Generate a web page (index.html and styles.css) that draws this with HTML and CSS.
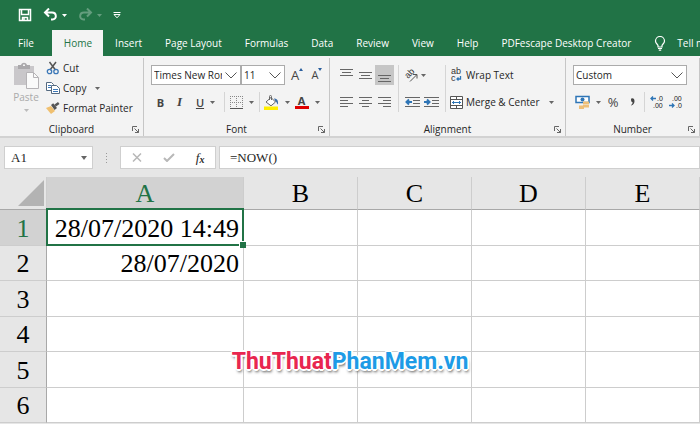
FILE: index.html
```html
<!DOCTYPE html>
<html lang="en">
<head>
    <meta charset="UTF-8">
    <meta name="viewport" content="width=device-width, initial-scale=1.0">
    <title>Spreadsheet</title>
    <link rel="stylesheet" href="styles.css">
</head>
<body>
    <header class="top">
        <div class="quick-access">
            <button class="quick" aria-label="Save">
                <svg width="14" height="14" viewBox="0 0 14 14" fill="none" stroke="#fff" stroke-width="1.5"><path d="M1.5 1.5h11v11h-11z"/><path d="M3.5 1.5v5h7v-5M4.5 12.5v-3h5v3"/><path d="M6 10v2"/></svg>
            </button>
            <button class="quick" aria-label="Undo">
                <svg width="15" height="14" viewBox="0 0 15 14" fill="none" stroke="#fff" stroke-width="2"><path d="M6 .5 2 4.500l4 4M2.500 4.500h6.500c5 0 5 7 .5 7H8"/></svg>
                <svg class="arrow" width="5" height="3" viewBox="0 0 5 3"><path d="M0 0h5L2.500 3z"/></svg>
            </button>
            <button class="quick faded" aria-label="Redo">
                <svg width="15" height="14" viewBox="0 0 15 14" fill="none" stroke="#fff" stroke-width="2"><path d="M9 .5 13 4.500l-4 4M12.500 4.500H6c-5 0-5 7-.5 7H7"/></svg>
                <svg class="arrow" width="5" height="3" viewBox="0 0 5 3"><path d="M0 0h5L2.500 3z"/></svg>
            </button>
            <button class="quick" aria-label="Customize">
                <svg width="8" height="7" viewBox="0 0 8 7" fill="none" stroke="#fff"><path d="M0.500 .5h7M1 2.500h6L4 5.800z"/></svg>
            </button>
        </div>
        <nav class="tabs">
            <a href="#" class="tab file">File</a>
            <a href="#" class="tab active">Home</a>
            <a href="#" class="tab">Insert</a>
            <a href="#" class="tab">Page Layout</a>
            <a href="#" class="tab">Formulas</a>
            <a href="#" class="tab">Data</a>
            <a href="#" class="tab">Review</a>
            <a href="#" class="tab">View</a>
            <a href="#" class="tab">Help</a>
            <a href="#" class="tab">PDFescape Desktop Creator</a>
            <a href="#" class="tab tell">
                <svg width="12" height="15" viewBox="0 0 12 15" fill="none" stroke="#fff" stroke-width="1.200"><path d="M4 11V9.500C3.500 8 1.500 7.500 1.500 5a4.500 4.500 0 0 1 9 0c0 2.500-2 3-2.500 4.500V11zM4 12.500h4M4.800 14.200h2.400"/></svg>
                Tell me
            </a>
        </nav>
    </header>

    <div class="ribbon">
        <section class="group clipboard">
            <div class="tools">
                <button class="paste">
                    <svg width="26" height="27" viewBox="0 0 26 27"><path fill="#c9c7ca" d="M1 4h20v19H1z"/><path fill="#aaa8ab" d="M5 3h3c1-3 5-3 6 0h3v4H5z"/><path fill="#f3f3f3" d="M10 2.500h2v1.500h-2z"/><path fill="#fafafa" stroke="#b5b3b6" d="M13.500 10.500h7l5 5v11h-12z"/><path fill="none" stroke="#b5b3b6" d="M20.500 10.500v5h5"/></svg>
                    <span>Paste</span>
                    <svg class="arrow" width="5" height="3" viewBox="0 0 5 3"><path d="M0 0h5L2.500 3z"/></svg>
                </button>
                <div class="stack">
                    <button class="labelled">
                        <svg width="14" height="14" viewBox="0 0 14 14" fill="none"><path stroke="#555" stroke-width="1.500" d="M3.500 1 9.500 9M10 1 4 9"/><circle cx="3.500" cy="10.500" r="2.200" stroke="#3c78b8" stroke-width="1.300"/><circle cx="10" cy="10.500" r="2.200" stroke="#3c78b8" stroke-width="1.300"/></svg>
                        Cut
                    </button>
                    <button class="labelled">
                        <svg width="14" height="14" viewBox="0 0 14 14" fill="#fff" stroke="#556a80"><path d="M.5 1.500h5l2 2v6h-7z"/><path d="M2 4.500h3M2 6.500h3" stroke="#3c78b8"/><path d="M5.500 4.500h5l3 3v5h-8z"/><path d="M7 8.500h5M7 10.500h5" stroke="#3c78b8"/></svg>
                        Copy
                        <svg class="arrow" width="5" height="3" viewBox="0 0 5 3"><path d="M0 0h5L2.500 3z"/></svg>
                    </button>
                    <button class="labelled">
                        <svg width="14" height="14" viewBox="0 0 14 14"><path fill="#f0c070" d="m0 7 5-2 4 5-4 3z"/><path fill="#555" d="m5 4 2.200-1.800L11 7 8.600 9zM8.500 3.500 12 1l1.500 2L10 5.500z"/></svg>
                        Format Painter
                    </button>
                </div>
            </div>
            <h2>Clipboard <svg class="launcher" width="7" height="7" viewBox="0 0 7 7"><path d="M.5 5V.5H5M2.500 2.500l4 4M6.500 3v3.500H3"/></svg></h2>
        </section>

        <section class="group font">
            <div class="tools rows">
                <div class="row">
                    <span class="combo family">
                        <select aria-label="Font"><option>Times New Roman</option></select>
                        <svg class="chevron" width="12" height="7" viewBox="0 0 12 7"><path d="M.5.5 6 6 11.500.5"/></svg>
                    </span>
                    <span class="combo size">
                        <select aria-label="Font size"><option>11</option></select>
                        <svg class="chevron" width="12" height="7" viewBox="0 0 12 7"><path d="M.5.5 6 6 11.500.5"/></svg>
                    </span>
                    <button class="tool grow" aria-label="Increase font size"><span>A</span><svg width="4" height="3" viewBox="0 0 4 3"><path fill="#2b5f9e" d="M0 3h4L2 0z"/></svg></button>
                    <button class="tool shrink" aria-label="Decrease font size"><span>A</span><svg width="4" height="3" viewBox="0 0 4 3"><path fill="#2b5f9e" d="M0 0h4L2 3z"/></svg></button>
                </div>
                <div class="row">
                    <button class="tool bold">B</button>
                    <button class="tool italic">I</button>
                    <button class="tool split underline"><u>U</u><svg class="arrow" width="5" height="3" viewBox="0 0 5 3"><path d="M0 0h5L2.500 3z"/></svg></button>
                    <span class="divider"></span>
                    <button class="tool split" aria-label="Borders">
                        <svg width="13" height="13" viewBox="0 0 13 13" fill="none" stroke="#888"><path stroke-dasharray="1 1" d="M.5 0v12M12.500 0v12M0 .5h13M6.500 0v12M0 6.500h13"/><path stroke="#555" d="M0 12.500h13"/></svg>
                        <svg class="arrow" width="5" height="3" viewBox="0 0 5 3"><path d="M0 0h5L2.500 3z"/></svg>
                    </button>
                    <span class="divider"></span>
                    <button class="tool split" aria-label="Fill color">
                        <svg width="15" height="15" viewBox="0 0 15 15"><path fill="#ffee00" d="M0 11.500h14v3.500H0z"/><path fill="#fff" stroke="#666" d="m2 7 5-4.500L11.500 7 7 10.800z"/><path fill="none" stroke="#666" d="M5.500 5V1.500c0-1.500 2-1.500 2 0V5"/><path fill="#3c6ea8" d="M10 3.500c3 0 4.500 2 4 6-1.500-.5-1-3-2.500-3z"/></svg>
                        <svg class="arrow" width="5" height="3" viewBox="0 0 5 3"><path d="M0 0h5L2.500 3z"/></svg>
                    </button>
                    <button class="tool split" aria-label="Font color">
                        <span class="letter">A</span>
                        <svg class="arrow" width="5" height="3" viewBox="0 0 5 3"><path d="M0 0h5L2.500 3z"/></svg>
                    </button>
                </div>
            </div>
            <h2>Font <svg class="launcher" width="7" height="7" viewBox="0 0 7 7"><path d="M.5 5V.5H5M2.500 2.500l4 4M6.500 3v3.500H3"/></svg></h2>
        </section>

        <section class="group alignment">
            <div class="tools">
                <div class="rows">
                    <div class="row">
                        <button class="tool" aria-label="Top align"><svg class="lines" width="13" height="13" viewBox="0 0 13 13"><path d="M0 .5h13M2 3.500h9M0 6.500h13"/></svg></button>
                        <button class="tool" aria-label="Middle align"><svg class="lines" width="13" height="13" viewBox="0 0 13 13"><path d="M0 3.500h13M2 6.500h9M0 9.500h13"/></svg></button>
                        <button class="tool pressed" aria-label="Bottom align"><svg class="lines" width="13" height="13" viewBox="0 0 13 13"><path d="M0 6.500h13M2 9.500h9M0 12.500h13"/></svg></button>
                    </div>
                    <div class="row">
                        <button class="tool" aria-label="Align left"><svg class="lines" width="13" height="13" viewBox="0 0 13 13"><path d="M0 1.500h13M0 4.500h8M0 7.500h13M0 10.500h8"/></svg></button>
                        <button class="tool" aria-label="Center"><svg class="lines" width="13" height="13" viewBox="0 0 13 13"><path d="M0 1.500h13M3 4.500h7M0 7.500h13M3 10.500h7"/></svg></button>
                        <button class="tool" aria-label="Align right"><svg class="lines" width="13" height="13" viewBox="0 0 13 13"><path d="M0 1.500h13M5 4.500h8M0 7.500h13M5 10.500h8"/></svg></button>
                    </div>
                </div>
                <span class="divider"></span>
                <div class="rows">
                    <div class="row">
                        <button class="tool split orient" aria-label="Orientation">
                            <svg width="16" height="16" viewBox="0 0 16 16"><text x="0" y="0" transform="translate(5 12) rotate(-45)" class="tiny">ab</text><path fill="none" stroke="#555" d="M7 14.500 13.500 8M10 7.500h4v4"/></svg>
                            <svg class="arrow" width="5" height="3" viewBox="0 0 5 3"><path d="M0 0h5L2.500 3z"/></svg>
                        </button>
                    </div>
                    <div class="row">
                        <button class="tool" aria-label="Decrease indent"><svg class="lines" width="15" height="13" viewBox="0 0 15 13"><path d="M0 1.500h15M8 4.500h7M8 7.500h7M0 10.500h15"/><path stroke="#2e75b6" stroke-width="2" d="M7 6H2M4 3.500 1.500 6 4 8.500"/></svg></button>
                        <button class="tool" aria-label="Increase indent"><svg class="lines" width="15" height="13" viewBox="0 0 15 13"><path d="M0 1.500h15M8 4.500h7M8 7.500h7M0 10.500h15"/><path stroke="#2e75b6" stroke-width="2" d="M0 6h5M3 3.500 5.500 6 3 8.500"/></svg></button>
                    </div>
                </div>
                <span class="divider"></span>
                <div class="rows">
                    <div class="row">
                        <button class="labelled">
                            <svg width="13" height="18" viewBox="0 0 13 18"><text x="1" y="8" class="tiny">ab</text><text x="1" y="15" class="tiny">c</text><path fill="none" stroke="#2e75b6" stroke-width="1.300" d="M10.500 10v3H7M8.500 11.500 7 13l1.500 1.500"/></svg>
                            Wrap Text
                        </button>
                    </div>
                    <div class="row">
                        <button class="labelled">
                            <svg width="13" height="13" viewBox="0 0 13 13" fill="none" stroke="#555"><path fill="#fff" d="M.5.5h12v12H.5z"/><path d="M.5 3.500h12M.5 9.500h12M6.500.5v3M6.500 9.500v3"/><path stroke="#2e75b6" d="M2 6.500h9M4 5 2.500 6.500 4 8M9 5l1.500 1.500L9 8"/></svg>
                            Merge &amp; Center
                            <svg class="arrow" width="5" height="3" viewBox="0 0 5 3"><path d="M0 0h5L2.500 3z"/></svg>
                        </button>
                    </div>
                </div>
            </div>
            <h2>Alignment <svg class="launcher" width="7" height="7" viewBox="0 0 7 7"><path d="M.5 5V.5H5M2.500 2.500l4 4M6.500 3v3.500H3"/></svg></h2>
        </section>

        <section class="group number">
            <div class="tools rows">
                <div class="row">
                    <span class="combo format">
                        <select aria-label="Number format"><option>Custom</option></select>
                        <svg class="chevron" width="12" height="7" viewBox="0 0 12 7"><path d="M.5.5 6 6 11.500.5"/></svg>
                    </span>
                </div>
                <div class="row">
                    <button class="tool split" aria-label="Currency">
                        <svg width="15" height="14" viewBox="0 0 15 14"><path fill="#fff" stroke="#2e75b6" stroke-width="1.500" d="M1 1.500h13v6H1z"/><circle cx="7.500" cy="4.500" r="2" fill="#2e75b6"/><path fill="#eebf78" d="M8 6.500h6v3H8zM8 10h6v2.500H8zM4 10.500h5V14H4z"/></svg>
                        <svg class="arrow" width="5" height="3" viewBox="0 0 5 3"><path d="M0 0h5L2.500 3z"/></svg>
                    </button>
                    <button class="tool percent">%</button>
                    <button class="tool comma" aria-label="Comma style"><svg width="5" height="8" viewBox="0 0 5 8"><path fill="#444" d="M1 1.500C1-.2 4.500-.2 4.500 3c0 2-1 3.600-3 4.600L1 7c1.200-.8 1.600-1.600 1.600-2.800C1.600 4.200 1 3 1 1.500z"/></svg></button>
                    <span class="divider"></span>
                    <button class="tool" aria-label="Increase decimal"><svg width="15" height="18" viewBox="0 0 15 18"><text x="8" y="8" class="digits">.0</text><text x="4" y="15" class="digits">.00</text><path fill="none" stroke="#2e75b6" stroke-width="1.300" d="M7 5.500H2M4 3.500l-2 2 2 2"/></svg></button>
                    <button class="tool" aria-label="Decrease decimal"><svg width="15" height="18" viewBox="0 0 15 18"><text x="4" y="8" class="digits">.00</text><text x="8" y="15" class="digits">.0</text><path fill="none" stroke="#2e75b6" stroke-width="1.300" d="M1 12.500h5M4 10.500l2 2-2 2"/></svg></button>
                </div>
            </div>
            <h2>Number <svg class="launcher" width="7" height="7" viewBox="0 0 7 7"><path d="M.5 5V.5H5M2.500 2.500l4 4M6.500 3v3.500H3"/></svg></h2>
        </section>
    </div>

    <div class="formula-bar">
        <span class="name-box">
            <input type="text" value="A1" aria-label="Name box">
            <svg class="arrow" width="6" height="4" viewBox="0 0 6 4"><path d="M0 0h6L3 4z"/></svg>
        </span>
        <svg class="dots" width="2" height="10" viewBox="0 0 2 10"><path fill="#999" d="M0 0h1v1H0zM0 3h1v1H0zM0 6h1v1H0zM0 9h1v1H0z"/></svg>
        <div class="formula-buttons">
            <button aria-label="Cancel"><svg width="10" height="9" viewBox="0 0 10 9" fill="none" stroke="#b8b8b8" stroke-width="1.500"><path d="m1 .5 8 8M9 .5l-8 8"/></svg></button>
            <button aria-label="Enter"><svg width="12" height="9" viewBox="0 0 12 9" fill="none" stroke="#b8b8b8" stroke-width="2"><path d="m1 5 3 3 7-7"/></svg></button>
            <button class="fx" aria-label="Insert function">f<sub>x</sub></button>
        </div>
        <input class="formula" type="text" value="=NOW()" aria-label="Formula">
    </div>

    <main class="sheet">
        <table>
            <colgroup><col class="col-head"><col class="col-a"><col><col><col><col></colgroup>
            <thead>
                <tr>
                    <th class="corner"><svg width="26" height="26" viewBox="0 0 26 26"><path fill="#b3b3b3" d="M26 0v26H0z"/></svg></th>
                    <th class="current">A</th><th>B</th><th>C</th><th>D</th><th>E</th>
                </tr>
            </thead>
            <tbody>
                <tr><th class="current">1</th><td class="selected">28/07/2020 14:49</td><td></td><td></td><td></td><td></td></tr>
                <tr><th>2</th><td>28/07/2020</td><td></td><td></td><td></td><td></td></tr>
                <tr><th>3</th><td></td><td></td><td></td><td></td><td></td></tr>
                <tr><th>4</th><td></td><td></td><td></td><td></td><td></td></tr>
                <tr><th>5</th><td></td><td></td><td></td><td></td><td></td></tr>
                <tr><th>6</th><td></td><td></td><td></td><td></td><td></td></tr>
            </tbody>
        </table>
        <p class="watermark"><span>ThuThuat</span>PhanMem.vn</p>
    </main>
</body>
</html>
```
FILE: styles.css
```css
/* General */
* {
    box-sizing: border-box;
}

body {
    margin: 0;
    height: 100vh;
    overflow: hidden;
    font-family: "Open Sans", "Noto Sans", sans-serif;
    font-size: 10px;
    color: #262626;
    background: #e6e6e6;
}

button,
input,
select {
    font: inherit;
    color: inherit;
    margin: 0;
    padding: 0;
    border: none;
    background: none;
    border-radius: 0;
}

svg {
    display: block;
    flex: none;
}

.arrow {
    fill: #666;
}

/* Title bar and tabs */
.top {
    background: #217346;
    color: #fff;
}

.quick-access {
    display: flex;
    align-items: center;
    gap: 11px;
    height: 30px;
    padding: 0 18px;
}

.quick {
    display: flex;
    align-items: center;
    gap: 4px;
}

.quick .arrow {
    fill: #fff;
}

.faded {
    opacity: 0.3;
}

.tabs {
    display: flex;
    height: 26px;
    padding-left: 6px;
    overflow: hidden;
}

.tab {
    display: flex;
    flex: none;
    align-items: center;
    padding: 0 11px 0 12px;
    color: #fff;
    text-decoration: none;
    white-space: nowrap;
}

.tab.file {
    margin-right: 7px;
}

.tab.active {
    background: #f3f3f3;
    color: #217346;
}

.tell {
    gap: 11px;
}

/* Ribbon */
.ribbon {
    display: flex;
    height: 82px;
    background: #f3f3f3;
    border-bottom: 2px solid #d2d2d2;
    overflow: hidden;
}

.group {
    display: flex;
    flex: none;
    flex-direction: column;
    justify-content: space-between;
    margin-top: 2px;
    border-right: 1px solid #c6c6c6;
}

.group h2 {
    display: flex;
    align-items: center;
    justify-content: center;
    position: relative;
    height: 14px;
    margin: 0;
    font-size: 10px;
    font-weight: 400;
}

.launcher {
    position: absolute;
    right: 4px;
    top: 4px;
    fill: none;
    stroke: #666;
}

.tools {
    display: flex;
    padding-top: 7px;
}

.clipboard {
    width: 144px;
}

.font {
    width: 186px;
}

.alignment {
    width: 236px;
}

.number {
    width: 134px;
}

.clipboard .tools {
    gap: 6px;
    padding: 0 0 0 12px;
}

.font .tools,
.alignment .tools,
.number .tools {
    padding-left: 7px;
}

.rows {
    display: flex;
    flex-direction: column;
    gap: 7px;
}

.row {
    display: flex;
    align-items: center;
    height: 20px;
}

.paste {
    display: flex;
    flex-direction: column;
    align-items: center;
    width: 28px;
    padding-top: 4px;
    color: #aaa;
    line-height: 16px;
}

.paste .arrow {
    margin-top: 4px;
    fill: #bbb;
}

.stack {
    display: flex;
    flex-direction: column;
}

.labelled {
    display: flex;
    align-items: center;
    gap: 3px;
    height: 20px;
    white-space: nowrap;
}

.labelled .arrow {
    margin-left: 6px;
}

.combo {
    display: block;
    position: relative;
    height: 20px;
}

.combo select {
    appearance: none;
    width: 100%;
    height: 20px;
    padding: 0 18px 0 2px;
    border: 1px solid #ababab;
    background: #fff;
    overflow: hidden;
}

.chevron {
    position: absolute;
    right: 4px;
    top: 7px;
    fill: none;
    stroke: #555;
    pointer-events: none;
}

.family {
    width: 90px;
}

.size {
    width: 44px;
}

.format {
    width: 114px;
}

.tool {
    display: flex;
    align-items: center;
    justify-content: center;
    width: 19px;
    height: 20px;
    color: #444;
}

.split {
    width: 30px;
    gap: 6px;
}

.orient {
    justify-content: flex-start;
    gap: 2px;
}

.grow,
.shrink {
    align-items: flex-start;
    width: 20px;
    font-size: 13px;
    line-height: 20px;
}

.grow {
    margin-left: 2px;
}

.shrink {
    font-size: 11px;
}

.grow svg,
.shrink svg {
    margin-top: 3px;
}

.bold {
    font-size: 11px;
    font-weight: 700;
}

.italic {
    font-family: "Liberation Serif", serif;
    font-size: 13px;
    font-style: italic;
    font-weight: 700;
}

.underline {
    width: 33px;
    font-size: 11px;
    font-weight: 600;
}

.pressed {
    background: #c6c6c6;
}

.lines {
    fill: none;
    stroke: #666;
}

.divider {
    flex: none;
    width: 1px;
    height: 20px;
    margin: 0 2px;
    background: #d5d5d5;
}

.alignment .divider {
    height: 47px;
    margin: 0 4px;
}

.letter {
    width: 14px;
    height: 14px;
    border-bottom: 3px solid #e00000;
    font-size: 11px;
    font-weight: 700;
    line-height: 12px;
    text-align: center;
}

.percent {
    width: 20px;
    font-size: 13px;
}

.tiny {
    font-family: "Liberation Sans", sans-serif;
    font-size: 9px;
    fill: #333;
}

.digits {
    font-family: "Liberation Sans", sans-serif;
    font-size: 7px;
    fill: #222;
}

/* Formula bar */
.formula-bar {
    display: flex;
    align-items: center;
    height: 39px;
    padding-left: 4px;
    font-family: "Liberation Serif", serif;
    font-size: 13px;
}

.name-box,
.formula-buttons,
.formula {
    height: 23px;
    background: #fff;
    border: 1px solid #cfcfcf;
}

.name-box {
    display: flex;
    align-items: center;
    width: 89px;
    padding: 0 5px 0 6px;
}

.name-box input {
    flex: 1;
    min-width: 0;
}

.dots {
    margin: 0 12px 0 13px;
}

.formula-buttons {
    display: flex;
    align-items: center;
    justify-content: space-around;
    width: 96px;
    margin-right: 3px;
}

.fx {
    font-style: italic;
}

.fx sub {
    font-size: 10px;
    font-weight: 700;
    vertical-align: -1px;
}

input.formula {
    flex: 1;
    min-width: 0;
    padding-left: 10px;
}

/* Sheet */
.sheet {
    position: relative;
    font-family: "Liberation Serif", serif;
    font-size: 26px;
    color: #000;
}

table {
    width: 100%;
    table-layout: fixed;
    border-collapse: separate;
    border-spacing: 0;
}

.col-head {
    width: 47px;
}

.col-a {
    width: 197px;
}

th,
td {
    height: 36px;
    padding: 2px 4px 0;
    border-right: 1px solid #cdcdcd;
    border-bottom: 1px solid #cdcdcd;
    line-height: 30px;
}

tbody tr:nth-child(even) > * {
    height: 35px;
}

th {
    font-weight: 400;
    text-align: center;
    background: #e6e6e6;
}

thead th {
    height: 33px;
    border-bottom-color: #a8a8a8;
}

tbody th {
    border-right-color: #a8a8a8;
}

td {
    position: relative;
    text-align: right;
    white-space: nowrap;
    background: #fff;
}

.current {
    color: #217346;
    background: #d2d2d2;
}

.corner {
    padding: 0 2px 0 0;
}

.corner svg {
    margin-left: auto;
}

/* Selection frame and its fill handle */
.selected::before {
    content: "";
    position: absolute;
    inset: -2px -1px -1px -1px;
    border: 2px solid #217346;
}

.selected::after {
    content: "";
    position: absolute;
    right: -3px;
    bottom: -3px;
    width: 6px;
    height: 6px;
    background: #217346;
    border: 1px solid #fff;
    border-width: 1px 0 0 1px;
    z-index: 1;
}

.watermark {
    position: absolute;
    left: 50%;
    top: 170px;
    transform: translateX(-50%);
    margin: 0;
    font-family: Roboto, "Liberation Sans", sans-serif;
    font-size: 23px;
    font-weight: 700;
    line-height: 30px;
    white-space: nowrap;
    color: #1e9be6;
    text-shadow: -2px 0 #fff, 2px 0 #fff, 0 -2px #fff, 0 2px #fff, -1px -1px #fff, 1px -1px #fff, -1px 1px #fff, 1px 1px #fff, 1px 3px 3px #555;
}

.watermark span {
    color: #e8264f;
}
```
